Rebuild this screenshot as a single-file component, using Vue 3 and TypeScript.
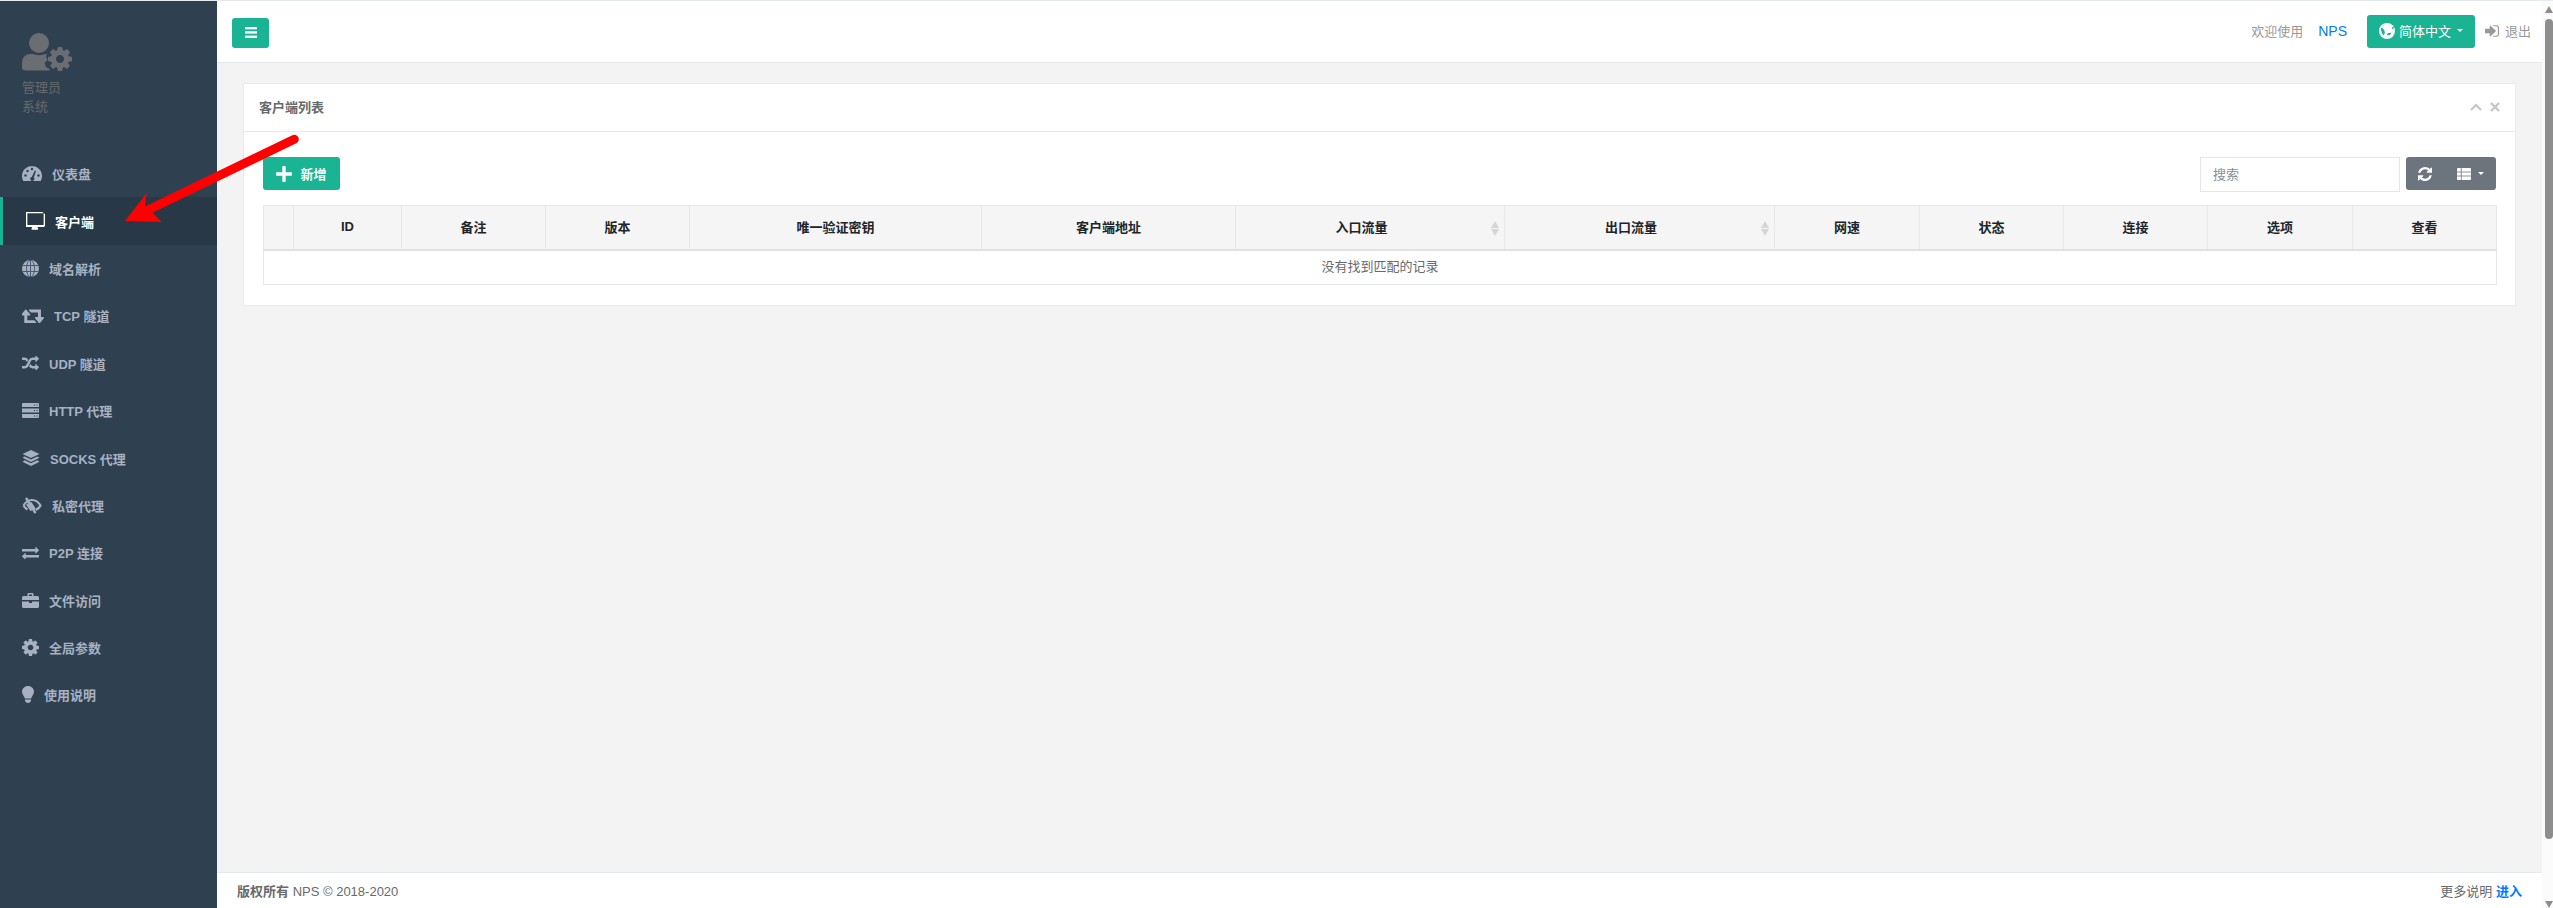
<script setup lang="ts">
const navItems = [
  { label: '仪表盘', w: 20, icon: 'tach' },
  { label: '客户端', w: 19, icon: 'desktop', active: true },
  { label: '域名解析', w: 17, icon: 'globe' },
  { label: 'TCP 隧道', w: 22, icon: 'retweet' },
  { label: 'UDP 隧道', w: 17, icon: 'random' },
  { label: 'HTTP 代理', w: 17, icon: 'server' },
  { label: 'SOCKS 代理', w: 18, icon: 'stack' },
  { label: '私密代理', w: 20, icon: 'lowvision' },
  { label: 'P2P 连接', w: 17, icon: 'exchange' },
  { label: '文件访问', w: 17, icon: 'briefcase' },
  { label: '全局参数', w: 17, icon: 'cog' },
  { label: '使用说明', w: 12, icon: 'bulb' },
]
const columns = [
  { label: '', w: 30 },
  { label: 'ID', w: 108 },
  { label: '备注', w: 144 },
  { label: '版本', w: 144 },
  { label: '唯一验证密钥', w: 292 },
  { label: '客户端地址', w: 254 },
  { label: '入口流量', w: 269, sort: true },
  { label: '出口流量', w: 270, sort: true },
  { label: '网速', w: 145 },
  { label: '状态', w: 144 },
  { label: '连接', w: 144 },
  { label: '选项', w: 145 },
  { label: '查看', w: 144 },
]
const cogPath = 'M1152 896q0-106-75-181t-181-75-181 75-75 181 75 181 181 75 181-75 75-181zm512-109v222q0 12-8 23t-20 13l-185 28q-19 54-39 91 35 50 107 138 10 12 10 25t-9 23q-27 37-99 108t-94 71q-12 0-26-9l-138-108q-44 23-91 38-16 136-29 186-7 28-36 28h-222q-14 0-24.5-8.5t-11.5-21.5l-28-184q-49-16-90-37l-141 107q-10 9-25 9-14 0-25-11-126-114-165-168-7-10-7-23 0-12 8-23 15-21 51-66.5t54-70.5q-27-50-41-99l-183-27q-13-2-21-12.5t-8-23.5v-222q0-12 8-23t19-13l186-28q14-46 39-92-40-57-107-138-10-12-10-24 0-10 9-23 26-36 98.5-107.5t94.5-71.5q13 0 26 10l138 107q44-23 91-38 16-136 29-186 7-28 36-28h222q14 0 24.5 8.5t11.5 21.5l28 184q49 16 90 37l142-107q9-9 24-9 13 0 25 10 129 119 165 170 7 8 7 22 0 12-8 23-15 21-51 66.5t-54 70.5q26 50 41 98l183 28q13 2 21 12.5t8 23.5z'
</script>

<template>
  <div class="page">
    <div class="shell">
      <aside class="sidebar">
        <div class="profile">
          <svg class="avatar" width="50" height="40" viewBox="0 0 50 40">
            <circle cx="17" cy="10" r="10" fill="#6a6e72" />
            <path d="M0 35v-5c0-6 4-9 9-9h2c3 1.500 9 1.500 12 0l2 .3-1 2.200 1.500 3.500-3 3 1.500 4 3.500 2 .5 1.500H4c-2.500 0-4-1-4-2.500z" fill="#6a6e72" />
            <svg x="26" y="14" width="24" height="24" viewBox="128 128 1536 1536"><path :d="cogPath" fill="#6a6e72" /></svg>
          </svg>
          <div class="role">管理员</div>
          <div class="role">系统</div>
        </div>
        <nav class="nav">
          <a v-for="item in navItems" :key="item.label" class="nav-item" :class="{ active: item.active }">
            <span class="nav-icon" :style="{ width: item.w + 'px' }">
              <svg v-if="item.icon === 'tach'" viewBox="0 0 20 15" fill="currentColor"><path d="M10 0C4.500 0 0 4.400 0 10c0 1.800.5 3.500 1.300 5h17.400c.8-1.500 1.300-3.200 1.300-5 0-5.600-4.500-10-10-10z" /><g fill="#2f4050"><circle cx="3.500" cy="9.500" r="1.200" /><circle cx="5.500" cy="5" r="1.200" /><circle cx="10" cy="3" r="1.200" /><circle cx="16.500" cy="9.500" r="1.200" /><path d="M12.800 4.500l1.200.6-2.200 6.500a2 2 0 1 1-2-.6z" /></g></svg>
              <svg v-else-if="item.icon === 'desktop'" viewBox="0 64 1792 1664" fill="currentColor"><path d="M1664 1248v-1024q0-13-9.500-22.500t-22.500-9.500h-1472q-13 0-22.500 9.500t-9.500 22.500v1024q0 13 9.500 22.500t22.500 9.500h1472q13 0 22.500-9.500t9.500-22.500zm128-1024v1088q0 66-47 113t-113 47h-544q0 37 16 77.500t32 71 16 43.500q0 26-19 45t-45 19h-512q-26 0-45-19t-19-45q0-14 16-44t32-70 16-78h-544q-66 0-113-47t-47-113v-1088q0-66 47-113t113-47h1472q66 0 113 47t47 113z" /></svg>
              <svg v-else-if="item.icon === 'globe'" viewBox="0 0 17 17"><circle cx="8.500" cy="8.500" r="8.500" fill="currentColor" /><g fill="none" stroke="#4a5a72" stroke-width="1"><ellipse cx="8.500" cy="8.500" rx="4" ry="8.500" /><path d="M8.500 0v17M.5 5.500h16M.5 11.500h16" /></g></svg>
              <svg v-else-if="item.icon === 'retweet'" viewBox="0 256 1856 1280" fill="currentColor"><path d="M1216 1504q0 13-9.500 22.500t-22.500 9.500h-960q-8 0-13.500-2t-9-7-5.500-8-3-11.500-1-11.500v-600h-192q-26 0-45-19t-19-45q0-24 15-41l320-384q19-22 49-22t49 22l320 384q15 17 15 41 0 26-19 45t-45 19h-192v384h576q16 0 25 11l160 192q7 11 7 21zm640-416q0 24-15 41l-320 384q-20 23-49 23t-49-23l-320-384q-15-17-15-41 0-26 19-45t45-19h192v-384h-576q-16 0-25-12l-160-192q-7-9-7-20 0-13 9.500-22.500t22.500-9.500h960q8 0 13.500 2t9 7 5.500 8.500 3 11.500 1 11v600h192q26 0 45 19t19 45z" /></svg>
              <svg v-else-if="item.icon === 'random'" viewBox="0 96 1792 1472" fill="currentColor"><path d="M666 481q-60 92-137 273-22-45-37-72.500t-40.500-63.500-51-56.500-63-35-81.500-14.500h-224q-14 0-23-9t-9-23v-192q0-14 9-23t23-9h224q250 0 410 225zm1126 799q0 14-9 23l-320 320q-9 9-23 9-13 0-22.500-9.500t-9.500-22.500v-192q-32 0-85 .5t-81 1-73-1-71-5-64-10.500-63-18.500-58-28.500-59-40-55-53.500-56-69.500q59-93 136-273 22 45 37 72.500t40.500 63.500 51 56.500 63 35 81.500 14.500h256v-192q0-14 9-23t23-9q12 0 24 10l319 319q9 9 9 23zm0-896q0 14-9 23l-320 320q-9 9-23 9-13 0-22.500-9.500t-9.500-22.500v-192h-256q-48 0-87 15t-69 45-51 61.500-45 77.500q-32 62-78 171-29 66-49.500 111t-54 105-64 100-74 83-90 68.500-106.500 42-128 16.500h-224q-14 0-23-9t-9-23v-192q0-14 9-23t23-9h224q48 0 87-15t69-45 51-61.500 45-77.500q32-62 78-171 29-66 49.500-111t54-105 64-100 74-83 90-68.500 106.500-42 128-16.500h256v-192q0-14 9-23t23-9q12 0 24 10l319 319q9 9 9 23z" /></svg>
              <svg v-else-if="item.icon === 'server'" viewBox="0 0 17 15" fill="currentColor"><path d="M1 0h15a1 1 0 0 1 1 1v3H0V1a1 1 0 0 1 1-1zM0 5.500h17v4H0zM0 11h17v3a1 1 0 0 1-1 1H1a1 1 0 0 1-1-1z" /><g fill="#2f4050"><rect x="12" y="1.500" width="1" height="1" /><rect x="14.500" y="1.500" width="1" height="1" /><rect x="12" y="7" width="1" height="1" /><rect x="14.500" y="7" width="1" height="1" /><rect x="12" y="12.500" width="1" height="1" /><rect x="14.500" y="12.500" width="1" height="1" /></g></svg>
              <svg v-else-if="item.icon === 'stack'" viewBox="0 0 18 16" fill="currentColor"><path d="M9 0l8.500 4L9 8 .5 4z" /><path d="M2.700 6.500L.5 7.800 9 12l8.500-4.200-2.200-1.300L9 9.500z" /><path d="M2.700 10.300L.5 11.700 9 16l8.500-4.300-2.200-1.400L9 13.300z" /></svg>
              <svg v-else-if="item.icon === 'lowvision'" viewBox="0 0 20 17" fill="none" stroke="currentColor" stroke-width="2.200"><path d="M1.500 8.500C3.500 5 6.500 3 10 3c3.500 0 6.500 2 8.500 5.500-1 2-2.800 3.700-4.800 4.600" /><path d="M1.500 8.500c1 1.800 2.300 3 4 4M5 7l4.500 6.500" /><path d="M4 .8l9.500 15.400" stroke-width="2.400" /><path d="M8.500 5.300l4.500 7" stroke-width="1.800" /></svg>
              <svg v-else-if="item.icon === 'exchange'" viewBox="0 192 1792 1408" fill="currentColor"><path d="M1792 1184v192q0 13-9.500 22.500t-22.500 9.500h-1376v192q0 13-9.500 22.500t-22.500 9.500q-12 0-24-10l-319-320q-9-9-9-22 0-14 9-23l320-320q9-9 23-9 13 0 22.500 9.500t9.500 22.500v192h1376q13 0 22.500 9.500t9.500 22.500zm0-544q0 14-9 23l-320 320q-9 9-23 9-13 0-22.500-9.500t-9.500-22.500v-192h-1376q-13 0-22.500-9.500t-9.500-22.500v-192q0-13 9.500-22.500t22.500-9.500h1376v-192q0-14 9-23t23-9q12 0 24 10l319 319q9 9 9 23z" /></svg>
              <svg v-else-if="item.icon === 'briefcase'" viewBox="0 0 17 15" fill="currentColor"><path d="M5.500 3V1.200C5.500.5 6 0 6.700 0h3.600c.7 0 1.200.5 1.200 1.200V3h4A1.500 1.500 0 0 1 17 4.500V7H0V4.500A1.500 1.500 0 0 1 1.500 3zM7 3h3V1.500H7z" fill-rule="evenodd" /><path d="M0 8.500h7V10h3V8.500h7v5A1.500 1.500 0 0 1 15.500 15h-14A1.500 1.500 0 0 1 0 13.500z" /></svg>
              <svg v-else-if="item.icon === 'cog'" viewBox="128 128 1536 1536" fill="currentColor"><path :d="cogPath" /></svg>
              <svg v-else viewBox="0 0 12 17" fill="currentColor"><path d="M6 0C2.700 0 0 2.500 0 5.800c0 2.700 2.300 4.100 2.800 6.700h6.400C9.700 9.900 12 8.500 12 5.800 12 2.500 9.300 0 6 0z" /><path d="M3 13.500h6v1.500L8 16.200C7.500 16.800 6.800 17 6 17s-1.500-.2-2-.8L3 15z" /></svg>
            </span>
            <span>{{ item.label }}</span>
          </a>
        </nav>
      </aside>

      <div class="main">
        <header class="navbar">
          <button class="btn btn-green menu-btn" type="button" aria-label="菜单">
            <svg width="12" height="11" viewBox="0 0 12 11" fill="#fff"><rect width="12" height="2.300" /><rect y="4.300" width="12" height="2.300" /><rect y="8.600" width="12" height="2.300" /></svg>
          </button>
          <div class="nav-right">
            <span class="welcome">欢迎使用</span>
            <a class="nps">NPS</a>
            <button class="btn btn-green lang-btn" type="button">
              <svg width="16" height="16" viewBox="0 0 16 16"><circle cx="8" cy="8" r="8" fill="#fff" /><path d="M2 5c1.500-1 2.500 1 3.500 3 1 2-.5 3.500-1 4.500C3 11 2 8 2 5zM8 11c1.500-1 3-1.500 4-1 .8 1-1.500 2-2.500 2.200C8.500 12.500 8 12 8 11zM15 4.500c-.5 1-1.300 1.500-2 1.500 0-1 .3-2 1-2.500z" fill="#1ab394" /></svg>
              <span>简体中文</span>
              <i class="caret"></i>
            </button>
            <a class="logout">
              <svg width="14" height="12" viewBox="0 256 1536 1280" fill="#999"><path d="M1184 896q0 26-19 45l-544 544q-19 19-45 19t-45-19-19-45v-288h-448q-26 0-45-19t-19-45v-384q0-26 19-45t45-19h448v-288q0-26 19-45t45-19 45 19l544 544q19 19 19 45zm352-352v704q0 119-84.500 203.500t-203.500 84.500h-320q-13 0-22.500-9.500t-9.500-22.500q0-4-1-20t-.5-26.500 3-23.500 10-19.500 20.500-6.500h320q66 0 113-47t47-113v-704q0-66-47-113t-113-47h-312l-11.500-1-11.500-3-8-5.500-7-9-2-13.500q0-4-1-20t-.5-26.500 3-23.500 10-19.500 20.500-6.500h320q119 0 203.500 84.500t84.500 203.500z" /></svg>
              <span>退出</span>
            </a>
          </div>
        </header>

        <main class="content">
          <section class="card">
            <div class="card-head">
              <h5>客户端列表</h5>
              <div class="tools">
                <svg width="12" height="8" viewBox="0 0 12 8" fill="none" stroke="#c4c6c8" stroke-width="2.200"><path d="M1 7l5-5 5 5" /></svg>
                <svg width="10" height="10" viewBox="0 0 10 10" fill="none" stroke="#c4c6c8" stroke-width="2.400"><path d="M1 1l8 8M9 1l-8 8" /></svg>
              </div>
            </div>
            <div class="card-body">
              <div class="toolbar">
                <button class="btn btn-green add-btn" type="button">
                  <svg width="16" height="16" viewBox="0 0 16 16" fill="#fff"><rect x="6.300" width="3.400" height="16" rx=".8" /><rect y="6.300" width="16" height="3.400" rx=".8" /></svg>
                  <span>新增</span>
                </button>
                <div class="toolbar-right">
                  <input class="search" type="text" placeholder="搜索" />
                  <div class="btn-group">
                    <svg width="14" height="14" viewBox="128 128 1536 1536" fill="#fff"><path d="M1639 1056q0 5-1 7-64 268-268 434.500t-478 166.500q-146 0-282.500-55t-243.500-157l-129 129q-19 19-45 19t-45-19-19-45v-448q0-26 19-45t45-19h448q26 0 45 19t19 45-19 45l-137 137q71 66 161 102t187 36q134 0 250-65t186-179q11-17 53-117 8-23 30-23h192q13 0 22.500 9.500t9.500 22.500zm25-800v448q0 26-19 45t-45 19h-448q-26 0-45-19t-19-45 19-45l138-138q-148-137-349-137-134 0-250 65t-186 179q-11 17-53 117-8 23-30 23h-199q-13 0-22.500-9.500t-9.500-22.500v-7q65-268 270-434.500t480-166.500q146 0 284 55.500t245 156.500l130-129q19-19 45-19t45 19 19 45z" /></svg>
                    <span class="group-right">
                      <svg width="14" height="12" viewBox="0 0 14 12" fill="#fff"><path d="M0 1a1 1 0 0 1 1-1h12a1 1 0 0 1 1 1v10a1 1 0 0 1-1 1H1a1 1 0 0 1-1-1z" /><path d="M4.300 0v12M0 4h14M0 8h14" stroke="#6c757d" stroke-width=".8" /></svg>
                      <i class="caret"></i>
                    </span>
                  </div>
                </div>
              </div>
              <table class="table">
                <colgroup>
                  <col v-for="(c, i) in columns" :key="i" :style="{ width: c.w + 'px' }" />
                </colgroup>
                <thead>
                  <tr>
                    <th v-for="(c, i) in columns" :key="i" :class="{ sortable: c.sort }">
                      {{ c.label }}
                      <span v-if="c.sort" class="sort"><i class="up"></i><i class="down"></i></span>
                    </th>
                  </tr>
                </thead>
                <tbody>
                  <tr>
                    <td :colspan="columns.length">没有找到匹配的记录</td>
                  </tr>
                </tbody>
              </table>
            </div>
          </section>
        </main>

        <footer class="footer">
          <div><strong>版权所有</strong> NPS © 2018-2020</div>
          <div>更多说明 <a class="link"><strong>进入</strong></a></div>
        </footer>

        <svg class="annotation" width="180" height="100" viewBox="0 0 180 100">
          <path d="M169.300 9.300L24 79.500" stroke="#ff0000" stroke-width="9" stroke-linecap="round" fill="none" />
          <path d="M0 91L21.700 63 20 76 28 83 36.700 92z" fill="#ff0000" />
        </svg>
      </div>

      <div class="scrollbar">
        <i class="arrow-up"></i>
        <div class="thumb"></div>
        <i class="arrow-down"></i>
      </div>
    </div>
  </div>
</template>

<style>
html, body { margin: 0; padding: 0; overflow: hidden; }
</style>

<style scoped>
.page {
  width: 2553px;
  height: 908px;
  box-sizing: border-box;
  border-top: 1px solid #e7eaec;
  font-family: "Liberation Sans", "Noto Sans CJK SC", sans-serif;
  font-size: 13px;
  color: #676a6c;
  overflow: hidden;
}
.shell { display: flex; height: 100%; }

.sidebar { width: 217px; flex: none; background: #2f4050; color: #a7b1c2; }
.profile { padding: 32px 22px 0; height: 149px; box-sizing: border-box; }
.avatar { display: block; margin-bottom: 5px; }
.role { font-size: 13px; line-height: 19px; color: #676a6c; }
.nav { display: flex; flex-direction: column; }
.nav-item {
  display: flex;
  align-items: center;
  gap: 10px;
  height: 47.4px;
  padding-left: 22px;
  font-weight: 700;
  box-sizing: border-box;
}
.nav-icon { display: block; flex: none; line-height: 0; }
.nav-icon svg { display: block; width: 100%; height: auto; }
.nav-item.active {
  background: #293846;
  color: #fff;
  border-left: 3px solid #1ab394;
  padding-left: 23px;
}

.main { flex: 1; min-width: 0; display: flex; flex-direction: column; position: relative; }
.navbar {
  height: 62px;
  flex: none;
  box-sizing: border-box;
  background: #fff;
  border-bottom: 1px solid #e7eaec;
  display: flex;
  align-items: center;
  justify-content: space-between;
  padding-left: 15px;
  padding-right: 11px;
}
.btn {
  border: none;
  border-radius: 3px;
  color: #fff;
  font-family: inherit;
  font-size: 13px;
  padding: 0;
  display: inline-flex;
  align-items: center;
  justify-content: center;
}
.btn-green { background: #1ab394; }
.menu-btn { width: 37px; height: 30px; margin-top: 2px; }
.nav-right { display: flex; align-items: center; }
.welcome { color: #999; padding-bottom: 2px; }
.nps { color: #007bff; margin-left: 15px; font-size: 14px; padding-bottom: 2px; }
.lang-btn { width: 108px; height: 33px; margin-left: 20px; gap: 4px; padding-bottom: 2px; }
.logout { display: flex; align-items: center; gap: 6px; color: #999; margin-left: 10px; padding-bottom: 2px; }
.caret {
  display: inline-block;
  border-top: 3.500px solid #fff;
  border-left: 3.500px solid transparent;
  border-right: 3.500px solid transparent;
  margin-left: 2px;
}

.content { flex: 1; min-height: 0; background: #f3f3f3; padding: 20px 26px 0; }
.card { background: #fff; border: 1px solid #e7eaec; }
.card-head {
  height: 48px;
  box-sizing: border-box;
  border-bottom: 1px solid #e7eaec;
  display: flex;
  align-items: center;
  justify-content: space-between;
  padding: 0 15px 2px;
}
.card-head h5 { margin: 0; font-size: 13px; font-weight: 700; color: #676a6c; }
.tools { display: flex; align-items: center; gap: 8px; }
.card-body { padding: 25px 19px 20px 19px; }
.toolbar { display: flex; justify-content: space-between; align-items: flex-start; margin-bottom: 13px; }
.add-btn { width: 77px; height: 33px; gap: 8px; font-weight: 700; }
.toolbar-right { display: flex; gap: 6px; }
.search {
  width: 200px;
  height: 35px;
  box-sizing: border-box;
  border: 1px solid #e5e6e7;
  padding: 0 12px;
  font-family: inherit;
  font-size: 13px;
  outline: none;
}
.search::placeholder { color: #8a8f94; }
.btn-group {
  width: 90px;
  height: 33px;
  background: #6c757d;
  border-radius: 3px;
  display: flex;
  align-items: center;
  justify-content: space-between;
  box-sizing: border-box;
  padding: 0 12px;
}
.group-right { display: flex; align-items: center; gap: 5px; }

.table { width: 2233px; border-collapse: collapse; table-layout: fixed; font-size: 13px; }
.table th {
  height: 44px;
  padding: 0 0 2px;
  box-sizing: border-box;
  background: #f5f5f6;
  border: 1px solid #e7e7e7;
  border-bottom: 2px solid #e2e2e2;
  color: #212529;
  font-weight: 700;
  text-align: center;
  position: relative;
}
.table th.sortable { padding-right: 17px; }
.table td {
  height: 35px;
  padding: 0 0 4px;
  box-sizing: border-box;
  border: 1px solid #e7e7e7;
  text-align: center;
  color: #676a6c;
}
.sort {
  position: absolute;
  right: 5px;
  top: 15px;
  display: flex;
  flex-direction: column;
  gap: 1px;
}
.sort i { display: block; border-left: 4.500px solid transparent; border-right: 4.500px solid transparent; }
.sort .up { border-bottom: 7px solid #d5d6d7; }
.sort .down { border-top: 7px solid #d5d6d7; }

.footer {
  height: 36px;
  flex: none;
  box-sizing: border-box;
  background: #fff;
  border-top: 1px solid #e7eaec;
  display: flex;
  align-items: center;
  justify-content: space-between;
  padding: 0 20px;
}
.link { color: #007bff; }

.annotation { position: absolute; left: -92px; top: 129px; pointer-events: none; }

.scrollbar {
  width: 11px;
  flex: none;
  background: #fbfbfb;
  position: relative;
}
.thumb {
  position: absolute;
  right: 0;
  top: 18px;
  height: 820px;
  width: 8px;
  background: #8d8d8d;
  border-radius: 4px;
}
.arrow-up, .arrow-down {
  position: absolute;
  right: 0;
  width: 0;
  border-left: 4px solid transparent;
  border-right: 4px solid transparent;
}
.arrow-up { top: 5px; border-bottom: 7px solid #8d8d8d; }
.arrow-down { bottom: 0; border-top: 7px solid #8d8d8d; }
</style>
